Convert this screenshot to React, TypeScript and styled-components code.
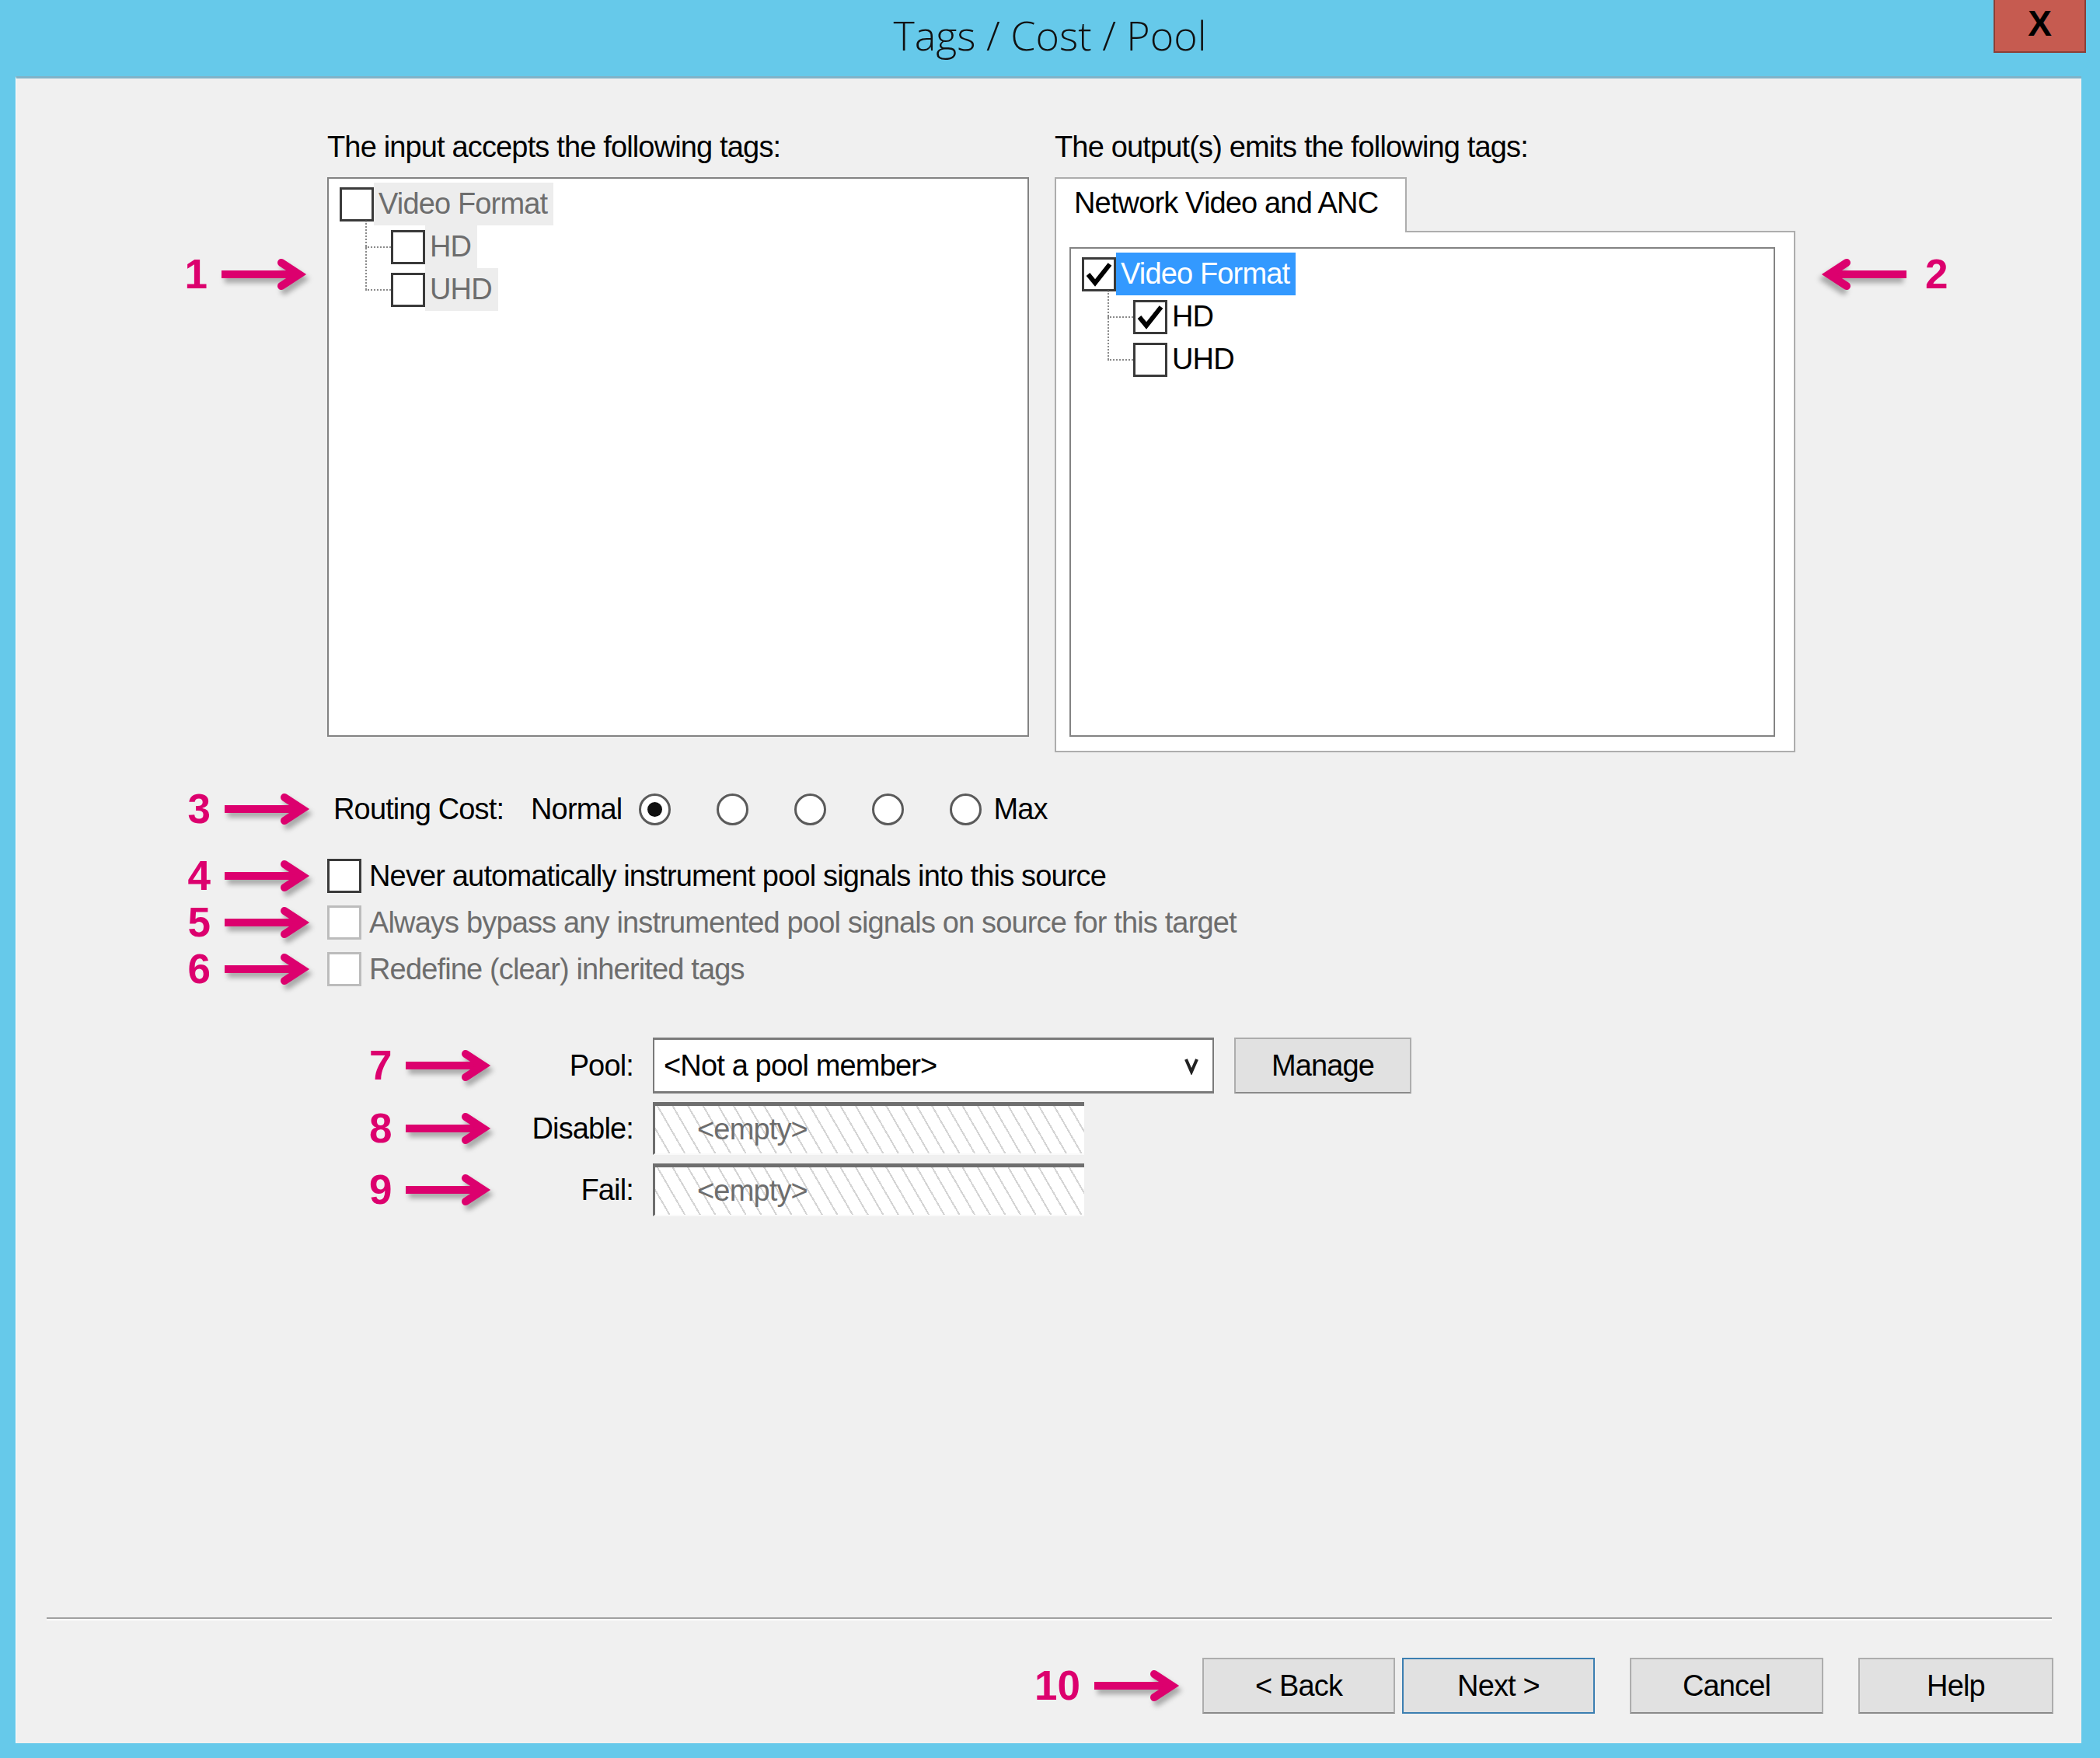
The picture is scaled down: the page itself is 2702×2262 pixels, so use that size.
import React from 'react';
import styled, { createGlobalStyle } from 'styled-components';

const GlobalStyle = createGlobalStyle`
  html, body {
    margin: 0;
    padding: 0;
  }
  body {
    background: #66c9ea;
    font-family: "Liberation Sans", Arial, sans-serif;
  }
  * {
    box-sizing: border-box;
  }
`;

const MAGENTA = '#dc006e';
const UI_FONT = '"Liberation Sans", Arial, sans-serif';

const Window = styled.div`
  width: 2702px;
  height: 2262px;
  display: flex;
  flex-direction: column;
  background: #66c9ea;
`;

const TitleBar = styled.header`
  height: 98px;
  display: grid;
  grid-template-columns: 1fr auto 1fr;
  align-items: start;
`;

const Title = styled.h1`
  grid-column: 2;
  margin: 0;
  padding-top: 10px;
  font-family: "Open Sans", "Noto Sans", sans-serif;
  font-weight: 300;
  font-size: 52px;
  line-height: 70px;
  color: #111;
`;

const CloseButton = styled.button`
  grid-column: 3;
  justify-self: end;
  margin-right: 18px;
  width: 119px;
  height: 68px;
  padding: 0 0 6px;
  background: #c65b50;
  border: 2px solid #8a3f37;
  border-top: none;
  font-family: "Liberation Sans", Arial, sans-serif;
  font-weight: 700;
  font-size: 46px;
  line-height: 1;
  color: #000;
`;

const Panel = styled.main`
  flex: 1;
  margin: 0 24px 19px 20px;
  background: #f0f0f0;
  border-top: 3px solid #80b3c9;
  border-left: 1px solid #ffffff;
  display: flex;
  flex-direction: column;
  font-family: ${UI_FONT};
  font-size: 38px;
  letter-spacing: -0.85px;
  color: #000;
`;

/* ---------- callouts ---------- */

const CalloutWrap = styled.div<{ $left?: boolean }>`
  display: flex;
  flex-direction: ${(p) => (p.$left ? 'row-reverse' : 'row')};
  align-items: center;
  gap: ${(p) => (p.$left ? '24px' : '18px')};
  height: 60px;
`;

const CalloutNumber = styled.span`
  font-family: "Liberation Sans", Arial, sans-serif;
  font-weight: 700;
  font-size: 53px;
  line-height: 60px;
  letter-spacing: 0;
  color: ${MAGENTA};
`;

const ArrowSvg = styled.svg<{ $left?: boolean }>`
  display: block;
  filter: drop-shadow(4px 6px 3px rgba(0, 0, 0, 0.3));
  transform: ${(p) => (p.$left ? 'scaleX(-1)' : 'none')};
`;

function Callout({ n, left }: { n: string; left?: boolean }) {
  return (
    <CalloutWrap $left={left}>
      <CalloutNumber>{n}</CalloutNumber>
      <ArrowSvg $left={left} width="112" height="44" viewBox="0 0 112 44">
        <rect x="0" y="17" width="100" height="10" fill={MAGENTA} />
        <polyline
          points="77,7 100,22 77,37"
          fill="none"
          stroke={MAGENTA}
          strokeWidth="10"
          strokeLinecap="round"
        />
      </ArrowSvg>
    </CalloutWrap>
  );
}

/* ---------- checkbox / radio ---------- */

const Box = styled.span<{ $muted?: boolean }>`
  flex: none;
  width: 44px;
  height: 44px;
  border: 3px solid ${(p) => (p.$muted ? '#bcbcbc' : '#3a3a3a')};
  background: #fff;
  display: flex;
  align-items: center;
  justify-content: center;
`;

function CheckBox({ checked, muted }: { checked?: boolean; muted?: boolean }) {
  return (
    <Box $muted={muted}>
      {checked && (
        <svg width="38" height="38" viewBox="0 0 38 38">
          <polyline points="5,19 14,30 33,6" fill="none" stroke="#000" strokeWidth="6" />
        </svg>
      )}
    </Box>
  );
}

const Radio = styled.span<{ $on?: boolean }>`
  flex: none;
  width: 41px;
  height: 41px;
  border-radius: 50%;
  border: 3px solid #5a5a5a;
  background: #fff;
  display: flex;
  align-items: center;
  justify-content: center;
  &::after {
    content: '';
    display: ${(p) => (p.$on ? 'block' : 'none')};
    width: 19px;
    height: 19px;
    border-radius: 50%;
    background: #111;
  }
`;

/* ---------- top: tag trees ---------- */

const TopRow = styled.section`
  display: flex;
  align-items: flex-start;
  margin-top: 66px;
`;

const CalloutSlot = styled.div`
  width: 400px;
  display: flex;
  justify-content: flex-end;
  padding-right: 24px;
  margin-top: 156px;
`;

const RightCalloutSlot = styled.div`
  margin-left: 31px;
  margin-top: 156px;
`;

const Column = styled.div<{ $w: number; $ml?: number }>`
  width: ${(p) => p.$w}px;
  margin-left: ${(p) => p.$ml || 0}px;
  display: flex;
  flex-direction: column;
`;

const Caption = styled.div`
  height: 44px;
  line-height: 44px;
  margin-bottom: 17px;
  white-space: nowrap;
`;

const TreeBox = styled.div<{ $h?: number }>`
  height: ${(p) => (p.$h ? `${p.$h}px` : 'auto')};
  flex: ${(p) => (p.$h ? 'none' : '1')};
  background: #fff;
  border: 2px solid #838383;
  padding: 5px 0 0 14px;
`;

const TreeRow = styled.div`
  display: flex;
  align-items: center;
  height: 55px;
`;

const NodeLabel = styled.span<{ $state: 'dim' | 'selected' | 'normal' }>`
  height: 55px;
  display: flex;
  align-items: center;
  padding: 0 8px 0 6px;
  white-space: nowrap;
  background: ${(p) =>
    p.$state === 'dim' ? '#ededed' : p.$state === 'selected' ? '#3399ff' : 'transparent'};
  color: ${(p) => (p.$state === 'dim' ? '#6d6d6d' : p.$state === 'selected' ? '#fff' : '#000')};
`;

const Connector = styled.span<{ $last?: boolean }>`
  position: relative;
  flex: none;
  width: 33px;
  height: 55px;
  margin-left: 33px;
  &::before {
    content: '';
    position: absolute;
    left: 0;
    top: -6px;
    bottom: ${(p) => (p.$last ? '27px' : '0')};
    border-left: 2px dotted #8a8a8a;
  }
  &::after {
    content: '';
    position: absolute;
    left: 0;
    right: 0;
    top: 27px;
    border-top: 2px dotted #8a8a8a;
  }
`;

type Node = { label: string; checked?: boolean };

function TagTree({
  root,
  children,
  state,
}: {
  root: Node;
  children: Node[];
  state: 'dim' | 'live';
}) {
  const dim = state === 'dim';
  return (
    <>
      <TreeRow>
        <CheckBox checked={root.checked} />
        <NodeLabel $state={dim ? 'dim' : 'selected'}>{root.label}</NodeLabel>
      </TreeRow>
      {children.map((c, i) => (
        <TreeRow key={c.label}>
          <Connector $last={i === children.length - 1} />
          <CheckBox checked={c.checked} />
          <NodeLabel $state={dim ? 'dim' : 'normal'}>{c.label}</NodeLabel>
        </TreeRow>
      ))}
    </>
  );
}

const TabStrip = styled.div`
  display: flex;
  margin-bottom: -2px;
  position: relative;
  z-index: 1;
`;

const Tab = styled.div`
  width: 453px;
  height: 71px;
  padding: 9px 0 0 23px;
  background: #fff;
  border: 2px solid #adadad;
  border-bottom: none;
  line-height: 44px;
  white-space: nowrap;
`;

const TabPage = styled.div`
  height: 671px;
  display: flex;
  flex-direction: column;
  background: #fff;
  border: 2px solid #adadad;
  padding: 19px 24px 18px 17px;
`;

/* ---------- options ---------- */

const AnnotatedRow = styled.div<{ $mt?: number }>`
  display: grid;
  grid-template-columns: 400px 1fr;
  align-items: center;
  height: 60px;
  margin-top: ${(p) => p.$mt || 0}px;
`;

const RowCallout = styled.div`
  display: flex;
  justify-content: flex-end;
  padding-right: 20px;
`;

const CostLine = styled.div`
  display: flex;
  align-items: center;
  white-space: nowrap;
`;

const CostLabel = styled.span`
  width: 262px;
  padding-left: 8px;
`;

const RadioSet = styled.div`
  display: flex;
  align-items: center;
  gap: 59px;
  margin: 0 15px 0 22px;
`;

const OptionLine = styled.label<{ $muted?: boolean }>`
  display: flex;
  align-items: center;
  gap: 10px;
  white-space: nowrap;
  color: ${(p) => (p.$muted ? '#6d6d6d' : '#000')};
`;

/* ---------- pool ---------- */

const PoolGrid = styled.section`
  display: grid;
  grid-template-columns: 160px 180px auto;
  grid-template-rows: 72px 68px 68px;
  row-gap: 11px;
  align-items: center;
  justify-content: start;
  margin-top: 58px;
  padding-left: 454px;
`;

const PoolLabel = styled.span`
  text-align: right;
  white-space: nowrap;
`;

const FieldCell = styled.div`
  display: flex;
  align-items: center;
  gap: 26px;
  padding-left: 25px;
`;

const Combo = styled.div`
  width: 722px;
  height: 72px;
  display: flex;
  align-items: center;
  justify-content: space-between;
  padding: 0 18px 0 12px;
  background: #fff;
  border: 2px solid #7a7a7a;
  border-top-width: 3px;
  border-bottom-width: 3px;
  white-space: nowrap;
`;

const Button = styled.button<{ $default?: boolean; $w?: number }>`
  width: ${(p) => p.$w || 248}px;
  height: 72px;
  padding: 0;
  background: #e1e1e1;
  border: 2px solid ${(p) => (p.$default ? '#3c7fb1' : '#adadad')};
  border-bottom-color: ${(p) => (p.$default ? '#3c7fb1' : '#8a8a8a')};
  font-family: ${UI_FONT};
  font-size: 38px;
  letter-spacing: -0.85px;
  color: #000;
`;

const HatchedField = styled.div`
  width: 555px;
  height: 68px;
  display: flex;
  align-items: center;
  padding-left: 54px;
  color: #6d6d6d;
  border-top: 5px solid #6e6e6e;
  border-left: 3px solid #6e6e6e;
  border-bottom: 2px solid #fafafa;
  background: repeating-linear-gradient(60deg, #ffffff 0 15px, #d4d4d4 15px 17px);
`;

/* ---------- footer ---------- */

const Footer = styled.footer`
  margin-top: auto;
  display: flex;
  flex-direction: column;
`;

const Separator = styled.div`
  height: 4px;
  margin: 0 38px 0 39px;
  border-top: 2px solid #a0a0a0;
  border-bottom: 2px solid #ffffff;
`;

const ButtonRow = styled.div`
  display: flex;
  align-items: center;
  justify-content: flex-end;
  gap: 45px;
  margin: 48px 0 38px;
  padding-right: 36px;
`;

const NavGroup = styled.div`
  display: flex;
  align-items: center;
  gap: 9px;
`;

const FooterCallout = styled.div`
  margin-right: -18px;
`;

function TagsCostPool() {
  return (
    <Window>
      <TitleBar>
        <Title>Tags / Cost / Pool</Title>
        <CloseButton>X</CloseButton>
      </TitleBar>
      <Panel>
        <TopRow>
          <CalloutSlot>
            <Callout n="1" />
          </CalloutSlot>
          <Column $w={903}>
            <Caption>The input accepts the following tags:</Caption>
            <TreeBox $h={720}>
              <TagTree
                state="dim"
                root={{ label: 'Video Format' }}
                children={[{ label: 'HD' }, { label: 'UHD' }]}
              />
            </TreeBox>
          </Column>
          <Column $w={953} $ml={33}>
            <Caption>The output(s) emits the following tags:</Caption>
            <TabStrip>
              <Tab>Network Video and ANC</Tab>
            </TabStrip>
            <TabPage>
              <TreeBox>
                <TagTree
                  state="live"
                  root={{ label: 'Video Format', checked: true }}
                  children={[{ label: 'HD', checked: true }, { label: 'UHD' }]}
                />
              </TreeBox>
            </TabPage>
          </Column>
          <RightCalloutSlot>
            <Callout n="2" left />
          </RightCalloutSlot>
        </TopRow>

        <AnnotatedRow $mt={43}>
          <RowCallout>
            <Callout n="3" />
          </RowCallout>
          <CostLine>
            <CostLabel>Routing Cost:</CostLabel>
            <span>Normal</span>
            <RadioSet>
              <Radio $on />
              <Radio />
              <Radio />
              <Radio />
              <Radio />
            </RadioSet>
            <span>Max</span>
          </CostLine>
        </AnnotatedRow>

        <AnnotatedRow $mt={26}>
          <RowCallout>
            <Callout n="4" />
          </RowCallout>
          <OptionLine>
            <CheckBox />
            Never automatically instrument pool signals into this source
          </OptionLine>
        </AnnotatedRow>
        <AnnotatedRow>
          <RowCallout>
            <Callout n="5" />
          </RowCallout>
          <OptionLine $muted>
            <CheckBox muted />
            Always bypass any instrumented pool signals on source for this target
          </OptionLine>
        </AnnotatedRow>
        <AnnotatedRow>
          <RowCallout>
            <Callout n="6" />
          </RowCallout>
          <OptionLine $muted>
            <CheckBox muted />
            Redefine (clear) inherited tags
          </OptionLine>
        </AnnotatedRow>

        <PoolGrid>
          <Callout n="7" />
          <PoolLabel>Pool:</PoolLabel>
          <FieldCell>
            <Combo>
              <span>&lt;Not a pool member&gt;</span>
              <svg width="18" height="24" viewBox="0 0 18 24">
                <polyline points="2,4 9,20 16,4" fill="none" stroke="#222" strokeWidth="4" />
              </svg>
            </Combo>
            <Button $w={228}>Manage</Button>
          </FieldCell>

          <Callout n="8" />
          <PoolLabel>Disable:</PoolLabel>
          <FieldCell>
            <HatchedField>&lt;empty&gt;</HatchedField>
          </FieldCell>

          <Callout n="9" />
          <PoolLabel>Fail:</PoolLabel>
          <FieldCell>
            <HatchedField>&lt;empty&gt;</HatchedField>
          </FieldCell>
        </PoolGrid>

        <Footer>
          <Separator />
          <ButtonRow>
            <FooterCallout>
              <Callout n="10" />
            </FooterCallout>
            <NavGroup>
              <Button>&lt; Back</Button>
              <Button $default>Next &gt;</Button>
            </NavGroup>
            <Button $w={249}>Cancel</Button>
            <Button $w={251}>Help</Button>
          </ButtonRow>
        </Footer>
      </Panel>
    </Window>
  );
}

export default function App() {
  return (
    <>
      <GlobalStyle />
      <TagsCostPool />
    </>
  );
}
